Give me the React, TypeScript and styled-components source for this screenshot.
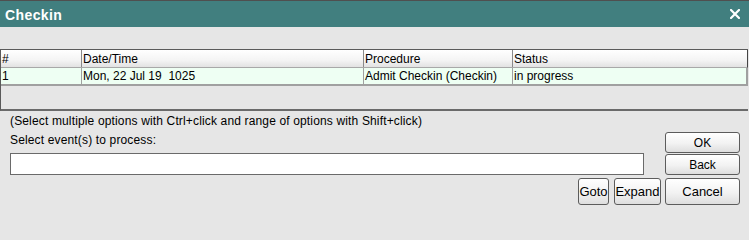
import React from "react";
import styled, { createGlobalStyle } from "styled-components";

const Global = createGlobalStyle`
  html, body { margin: 0; padding: 0; background: #e6e6e6; }
  body { font-family: "Liberation Sans", Arial, sans-serif; font-size: 12px; color: #000; }
  * { box-sizing: border-box; }
`;

const Dialog = styled.div`
  width: 749px;
  height: 210px;
  background: #e6e6e6;
  display: flex;
  flex-direction: column;
  overflow: hidden;
`;

const TitleBar = styled.div`
  height: 27px;
  border-top: 1px solid #4f4f4f;
  background: #417f7f;
  display: flex;
  align-items: center;
  justify-content: space-between;
  padding: 2px 9px 0 5px;
`;

const Title = styled.span`
  color: #fff;
  font-family: "Liberation Sans", Arial, sans-serif;
  font-weight: bold;
  font-size: 14px;
  letter-spacing: 0.4px;
`;

const CloseIcon = styled.svg`
  width: 10px;
  height: 10px;
  margin-top: -2px;
`;

const Spacer = styled.div`
  height: 22px;
`;

const TableFrame = styled.div`
  height: 62px;
  margin-right: 1px;
  border-top: 1px solid #5a5a5a;
  border-left: 1px solid #5a5a5a;
  border-bottom: 2px solid #6a6a6a;
  display: flex;
  flex-direction: column;
`;

const cols = "80px 282px 149px 236px";

const HeaderRow = styled.div`
  display: grid;
  grid-template-columns: ${cols};
  height: 18px;
  background: linear-gradient(#ffffff, #f4f4f4 60%, #e2e2e2);
  border-bottom: 1px solid #a8a8a8;
  border-right: 1px solid #444;
`;

const HeaderCell = styled.div<{ first?: boolean }>`
  padding-left: 1px;
  line-height: 18px;
  border-left: ${(p) => (p.first ? "none" : "1px solid #8a8a8a")};
  white-space: nowrap;
  overflow: hidden;
`;

const DataRow = styled.div`
  display: grid;
  grid-template-columns: ${cols};
  height: 18px;
  background: #eefff3;
  border-bottom: 2px solid #a0a0a0;
  border-right: 2px solid #a0a0a0;
`;

const DataCell = styled.div<{ first?: boolean }>`
  padding-left: 1px;
  line-height: 16px;
  border-left: ${(p) => (p.first ? "none" : "1px solid #a0a0a0")};
  white-space: nowrap;
  overflow: hidden;
`;

const Bottom = styled.div`
  display: flex;
  padding: 0 9px 0 10px;
  gap: 4px;
`;

const LeftCol = styled.div`
  flex: 1;
  display: flex;
  flex-direction: column;
`;

const Hint = styled.div`
  margin-top: 3px;
  line-height: 15px;
  font-size: 12px;
  letter-spacing: 0.15px;
`;

const Label = styled.div`
  margin-top: 4px;
  line-height: 15px;
  font-size: 12px;
  letter-spacing: 0.15px;
`;

const Input = styled.div`
  margin-top: 5px;
  margin-right: 17px;
  height: 22px;
  background: #fff;
  border: 1px solid #6a6a6a;
`;

const ButtonRow = styled.div`
  margin-top: 3px;
  display: flex;
  justify-content: flex-end;
  gap: 5px;
`;

const RightCol = styled.div`
  width: 75px;
  display: flex;
  flex-direction: column;
  padding-top: 21px;
`;

const Button = styled.button<{ h: number; w?: number; mt?: number }>`
  height: ${(p) => p.h}px;
  width: ${(p) => (p.w ? `${p.w}px` : "100%")};
  margin-top: ${(p) => p.mt ?? 0}px;
  padding: 0;
  border: 1px solid #5c5c5c;
  border-radius: 3px;
  background: linear-gradient(#ffffff, #f2f2f2 55%, #dedede);
  font-family: "Liberation Sans", Arial, sans-serif;
  font-size: ${(p) => (p.h > 24 ? 13 : 12)}px;
  color: #000;
  display: flex;
  align-items: center;
  justify-content: center;
`;

export default function App() {
  return (
    <>
      <Global />
      <Dialog>
        <TitleBar>
          <Title>Checkin</Title>
          <CloseIcon viewBox="0 0 10 10">
            <path d="M1 1 L9 9 M9 1 L1 9" stroke="#fff" strokeWidth="2.2" strokeLinecap="square" />
          </CloseIcon>
        </TitleBar>
        <Spacer />
        <TableFrame>
          <HeaderRow>
            <HeaderCell first>#</HeaderCell>
            <HeaderCell>Date/Time</HeaderCell>
            <HeaderCell>Procedure</HeaderCell>
            <HeaderCell>Status</HeaderCell>
          </HeaderRow>
          <DataRow>
            <DataCell first>1</DataCell>
            <DataCell>Mon, 22 Jul 19&nbsp;&nbsp;1025</DataCell>
            <DataCell>Admit Checkin (Checkin)</DataCell>
            <DataCell>in progress</DataCell>
          </DataRow>
        </TableFrame>
        <Bottom>
          <LeftCol>
            <Hint>(Select multiple options with Ctrl+click and range of options with Shift+click)</Hint>
            <Label>Select event(s) to process:</Label>
            <Input />
            <ButtonRow>
              <Button h={27} w={31}>Goto</Button>
              <Button h={27} w={47}>Expand</Button>
            </ButtonRow>
          </LeftCol>
          <RightCol>
            <Button h={21}>OK</Button>
            <Button h={21} mt={1}>Back</Button>
            <Button h={27} mt={3}>Cancel</Button>
          </RightCol>
        </Bottom>
      </Dialog>
    </>
  );
}
